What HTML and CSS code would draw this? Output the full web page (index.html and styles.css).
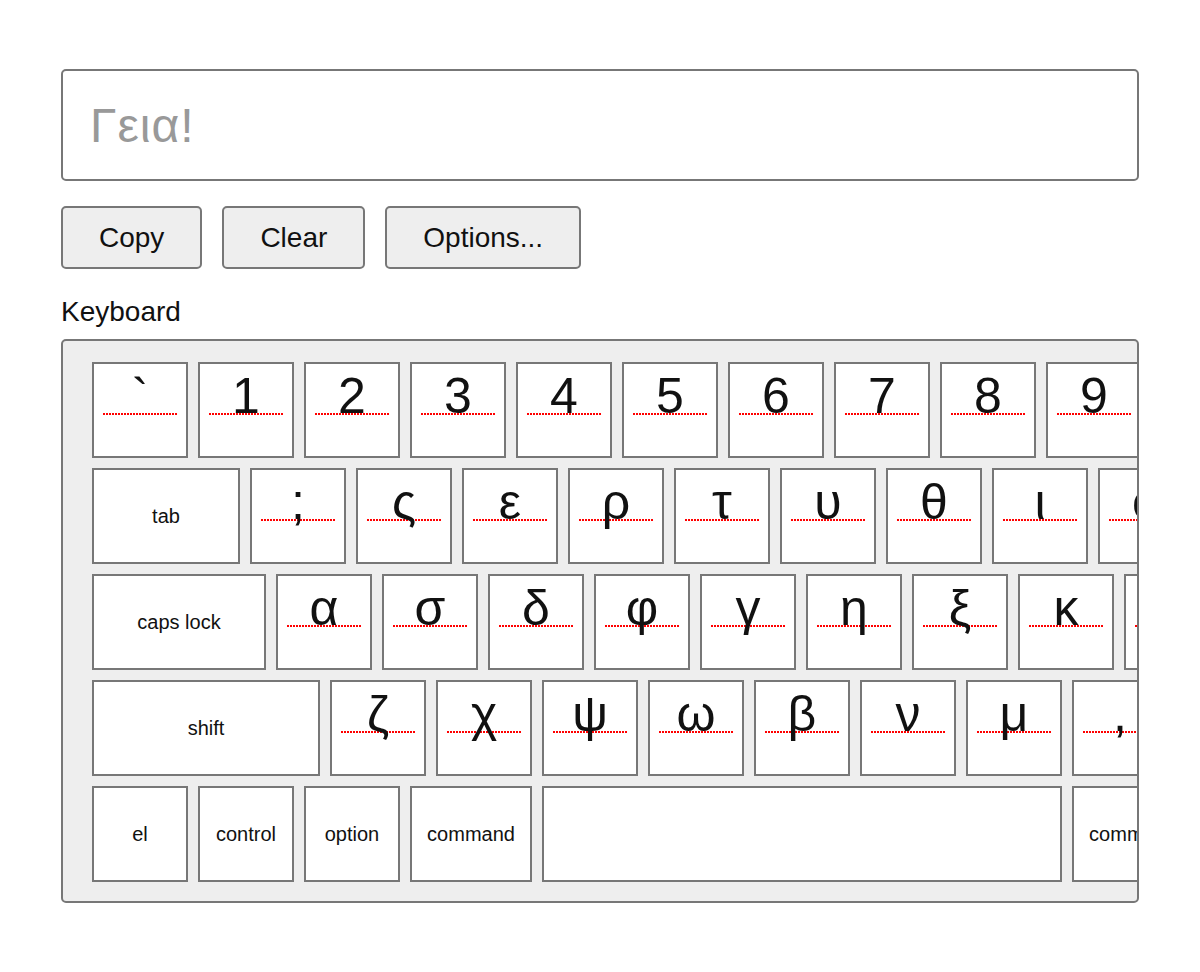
FILE: index.html
```html
<!DOCTYPE html>
<html lang="el">
<head>
<meta charset="utf-8"/>
<meta content="width=device-width, initial-scale=1.0" name="viewport"/>
<title>Greek Keyboard</title>
<link rel="stylesheet" href="styles.css">
</head>
<body>
<main class="page">
    <input class="text-box" type="text" placeholder="Γεια!"/>

    <div class="actions">
        <button>Copy</button>
        <button>Clear</button>
        <button>Options...</button>
    </div>

    <div class="section-title">Keyboard</div>

    <div class="keyboard">
        <div class="row">
            <div class="key"><div class="glyph">`</div><div class="line"></div></div>
            <div class="key"><div class="glyph">1</div><div class="line"></div></div>
            <div class="key"><div class="glyph">2</div><div class="line"></div></div>
            <div class="key"><div class="glyph">3</div><div class="line"></div></div>
            <div class="key"><div class="glyph">4</div><div class="line"></div></div>
            <div class="key"><div class="glyph">5</div><div class="line"></div></div>
            <div class="key"><div class="glyph">6</div><div class="line"></div></div>
            <div class="key"><div class="glyph">7</div><div class="line"></div></div>
            <div class="key"><div class="glyph">8</div><div class="line"></div></div>
            <div class="key"><div class="glyph">9</div><div class="line"></div></div>
            <div class="key"><div class="glyph">0</div><div class="line"></div></div>
            <div class="key"><div class="glyph">-</div><div class="line"></div></div>
            <div class="key"><div class="glyph">=</div><div class="line"></div></div>
            <div class="key mod wide-tab">delete</div>
        </div>
        <div class="row">
            <div class="key mod wide-tab">tab</div>
            <div class="key"><div class="glyph">;</div><div class="line"></div></div>
            <div class="key"><div class="glyph">ς</div><div class="line"></div></div>
            <div class="key"><div class="glyph">ε</div><div class="line"></div></div>
            <div class="key"><div class="glyph">ρ</div><div class="line"></div></div>
            <div class="key"><div class="glyph">τ</div><div class="line"></div></div>
            <div class="key"><div class="glyph">υ</div><div class="line"></div></div>
            <div class="key"><div class="glyph">θ</div><div class="line"></div></div>
            <div class="key"><div class="glyph">ι</div><div class="line"></div></div>
            <div class="key"><div class="glyph">ο</div><div class="line"></div></div>
            <div class="key"><div class="glyph">π</div><div class="line"></div></div>
            <div class="key"><div class="glyph">[</div><div class="line"></div></div>
            <div class="key"><div class="glyph">]</div><div class="line"></div></div>
        </div>
        <div class="row">
            <div class="key mod wide-caps">caps lock</div>
            <div class="key"><div class="glyph">α</div><div class="line"></div></div>
            <div class="key"><div class="glyph">σ</div><div class="line"></div></div>
            <div class="key"><div class="glyph">δ</div><div class="line"></div></div>
            <div class="key"><div class="glyph">φ</div><div class="line"></div></div>
            <div class="key"><div class="glyph">γ</div><div class="line"></div></div>
            <div class="key"><div class="glyph">η</div><div class="line"></div></div>
            <div class="key"><div class="glyph">ξ</div><div class="line"></div></div>
            <div class="key"><div class="glyph">κ</div><div class="line"></div></div>
            <div class="key"><div class="glyph">λ</div><div class="line"></div></div>
            <div class="key"><div class="glyph">΄</div><div class="line"></div></div>
            <div class="key"><div class="glyph">'</div><div class="line"></div></div>
            <div class="key mod wide-caps">return</div>
        </div>
        <div class="row">
            <div class="key mod wide-shift">shift</div>
            <div class="key"><div class="glyph">ζ</div><div class="line"></div></div>
            <div class="key"><div class="glyph">χ</div><div class="line"></div></div>
            <div class="key"><div class="glyph">ψ</div><div class="line"></div></div>
            <div class="key"><div class="glyph">ω</div><div class="line"></div></div>
            <div class="key"><div class="glyph">β</div><div class="line"></div></div>
            <div class="key"><div class="glyph">ν</div><div class="line"></div></div>
            <div class="key"><div class="glyph">μ</div><div class="line"></div></div>
            <div class="key"><div class="glyph">,</div><div class="line"></div></div>
            <div class="key"><div class="glyph">.</div><div class="line"></div></div>
            <div class="key"><div class="glyph">/</div><div class="line"></div></div>
            <div class="key mod wide-shift">shift</div>
        </div>
        <div class="row">
            <div class="key mod">el</div>
            <div class="key mod">control</div>
            <div class="key mod">option</div>
            <div class="key mod wide-cmd">command</div>
            <div class="key mod wide-space"></div>
            <div class="key mod wide-cmd">command</div>
            <div class="key mod">option</div>
        </div>
    </div>
</main>
</body>
</html>
```

FILE: styles.css
```css
body {
    margin: 0;
    font-family: "Liberation Sans", Arial, sans-serif;
    color: #111;
    background: #fff;
}

.page {
    padding: 69px 61px 0 61px;
}

.text-box {
    display: block;
    box-sizing: border-box;
    width: 100%;
    height: 112px;
    margin: 0;
    padding: 0 27px;
    border: 2px solid #777;
    border-radius: 5px;
    font-family: inherit;
    font-size: 48px;
    letter-spacing: 1px;
    color: #111;
    outline: none;
}
.text-box::placeholder {
    color: #999;
}

.actions {
    display: flex;
    gap: 20px;
    margin-top: 25px;
}
.actions button {
    box-sizing: border-box;
    height: 63px;
    padding: 0 36px;
    border: 2px solid #777;
    border-radius: 5px;
    background: #eee;
    font-family: inherit;
    font-size: 28px;
    color: #111;
    cursor: pointer;
}

.section-title {
    margin: 27px 0 11px;
    font-size: 28px;
    line-height: 32px;
}

/* keyboard */
.keyboard {
    display: flex;
    flex-direction: column;
    gap: 10px;
    padding: 21px 0 19px 29px;
    border: 2px solid #777;
    border-radius: 5px;
    background: #eee;
    overflow: hidden;
}
.row {
    display: flex;
    gap: 10px;
}
.key {
    flex: none;
    box-sizing: border-box;
    width: 96px;
    height: 96px;
    border: 2px solid #777;
    background: #fff;
    text-align: center;
}
.glyph {
    box-sizing: border-box;
    height: 49px;
    padding-top: 7px;
    font-size: 50px;
    line-height: 50px;
    white-space: nowrap;
}
.line {
    height: 2px;
    margin: 0 9px;
    background: repeating-linear-gradient(90deg, #f00 0 2px, transparent 2px 3px);
}
.key.mod {
    display: flex;
    align-items: center;
    justify-content: center;
    font-size: 20px;
    white-space: nowrap;
}
.wide-tab { width: 148px; }
.wide-caps { width: 174px; }
.wide-shift { width: 228px; }
.wide-cmd { width: 122px; }
.wide-space { width: 520px; }
```
